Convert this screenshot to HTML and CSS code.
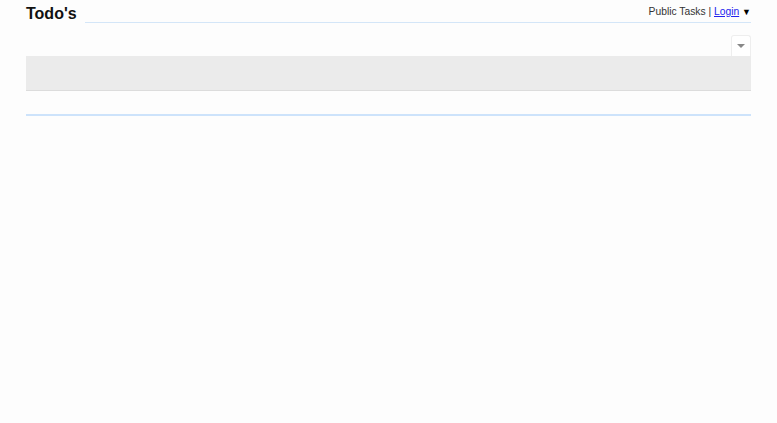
FILE: index.html
```html
<!DOCTYPE html>
<html lang="en">
<head>
    <meta charset="UTF-8">
    <title>Todo's</title>
    <link rel="stylesheet" href="styles.css">
</head>
<body>

<div class="container">
    <div class="header">
        <h1>Todo's</h1>
        <div class="header-line">
            <span class="user-menu">Public Tasks | <a href="#">Login</a> <span class="caret">&#9660;</span></span>
        </div>
    </div>

    <div class="toolbar">
        <button class="menu-toggle">
            <svg width="8" height="5" viewBox="0 0 8 5"><path d="M0 0h8L4 4z" fill="#888"/></svg>
        </button>
    </div>

    <div class="task-bar"></div>

    <div class="footer-line"></div>
</div>

</body>
</html>
```

FILE: styles.css
```css
/* General Styles */
body {
    font-family: "Liberation Sans", Arial, sans-serif;
    background-color: #fdfdfd;
    margin: 0;
    padding: 0;
}

.container {
    margin: 0 26px;
}

.header {
    display: flex;
    align-items: flex-end;
    padding-top: 4px;
}

h1 {
    font-size: 16px;
    font-weight: bold;
    color: #111;
    margin: 0 8px 0 0;
    line-height: 20px;
}

.header-line {
    flex: 1;
    text-align: right;
    border-bottom: 1px solid #d4e6f8;
    height: 18px;
    margin-bottom: 1px;
}

.user-menu {
    display: block;
    padding-top: 2px;
    font-size: 10.3px;
    color: #333;
    line-height: 12px;
}

.user-menu a {
    color: #2222ee;
}

.caret {
    font-size: 9px;
    color: #000;
}

.toolbar {
    display: flex;
    justify-content: flex-end;
    margin-top: 11px;
}

.menu-toggle {
    width: 20px;
    height: 21px;
    background: #fff;
    border: 1px solid #eee;
    border-bottom: none;
    border-radius: 3px 3px 0 0;
    padding: 0;
    display: flex;
    align-items: center;
    justify-content: center;
}

.task-bar {
    height: 34px;
    background-color: #ebebeb;
    border-bottom: 1px solid #dcdcdc;
}

.footer-line {
    margin-top: 23px;
    border-top: 2px solid #cde3fb;
}
```
